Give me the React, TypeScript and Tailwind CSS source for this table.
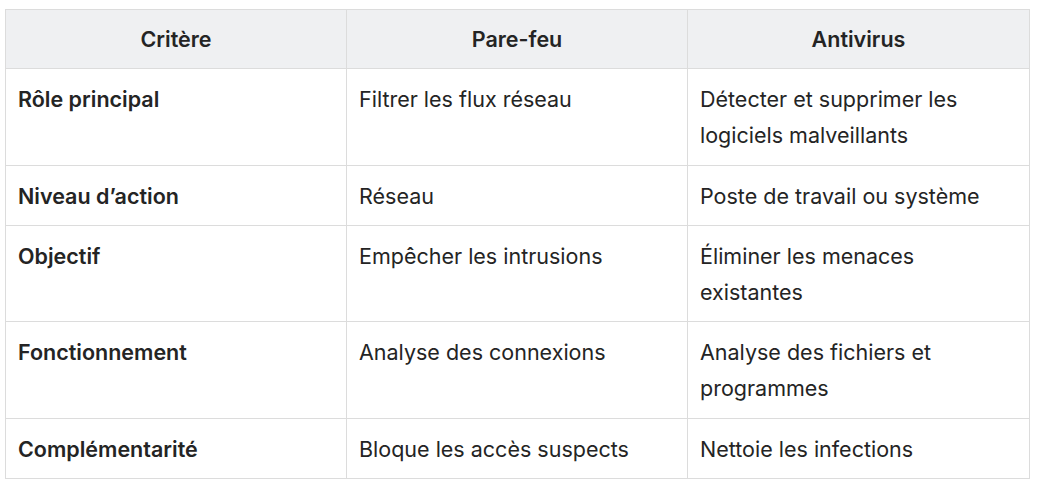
import React from "react";

const rows: { c: string; p: string; a: string; h: string }[] = [
  { c: "Rôle principal", p: "Filtrer les flux réseau", a: "Détecter et supprimer les logiciels malveillants", h: "h-[97px]" },
  { c: "Niveau d’action", p: "Réseau", a: "Poste de travail ou système", h: "h-[60px]" },
  { c: "Objectif", p: "Empêcher les intrusions", a: "Éliminer les menaces existantes", h: "h-[96px]" },
  { c: "Fonctionnement", p: "Analyse des connexions", a: "Analyse des fichiers et programmes", h: "h-[97px]" },
  { c: "Complémentarité", p: "Bloque les accès suspects", a: "Nettoie les infections", h: "h-[59px]" },
];

export default function App() {
  return (
    <div className="w-[1038px] h-[483px] bg-white pt-[9px] pl-[5px]" style={{ fontFamily: "Inter, 'Noto Sans', sans-serif" }}>
      <div className="w-[1025px] border border-[#dcdcdc] text-[21.5px] leading-[36px] text-[#242424]">
        <div className="grid grid-cols-3 h-[59px] bg-[#eff0f2] border-b border-[#dcdcdc] font-semibold">
          <div className="flex items-center justify-center border-r border-[#dcdcdc]">Critère</div>
          <div className="flex items-center justify-center border-r border-[#dcdcdc]">Pare-feu</div>
          <div className="flex items-center justify-center">Antivirus</div>
        </div>
        {rows.map((r, i) => (
          <div key={i} className={`grid grid-cols-3 ${r.h} ${i < rows.length - 1 ? "border-b border-[#dcdcdc]" : ""}`}>
            <div className="px-3 pt-[12px] border-r border-[#dcdcdc] font-semibold">{r.c}</div>
            <div className="px-3 pt-[12px] border-r border-[#dcdcdc]">{r.p}</div>
            <div className="px-3 pt-[12px]">{r.a}</div>
          </div>
        ))}
      </div>
    </div>
  );
}
